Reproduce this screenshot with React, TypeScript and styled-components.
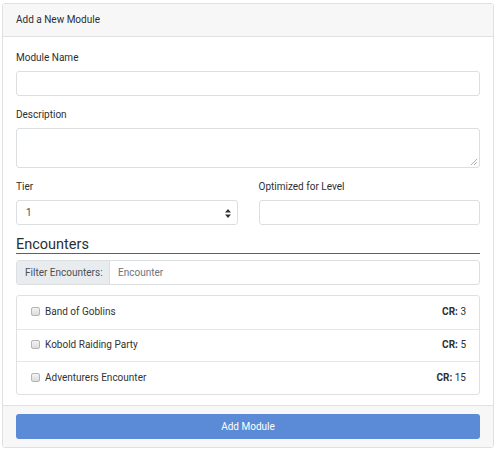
import React from "react";
import styled, { createGlobalStyle } from "styled-components";

const Global = createGlobalStyle`
  html, body { margin: 0; padding: 0; background: #fff; }
  body { font-family: Roboto, "Noto Sans", "Liberation Sans", sans-serif; font-size: 10px; color: #2b2f33; }
  * { box-sizing: border-box; }
`;

const Card = styled.div`
  margin: 3px 0 0 2px;
  width: 492px;
  height: 445px;
  border: 1px solid #e0e0e0;
  border-radius: 3px;
  display: flex;
  flex-direction: column;
  overflow: hidden;
`;

const CardHeader = styled.div`
  height: 33px;
  background: #f7f7f7;
  border-bottom: 1px solid #e0e0e0;
  padding: 0 13px;
  display: flex;
  align-items: center;
  line-height: 1;
`;

const CardBody = styled.div`
  flex: 1;
  padding: 13px 13px 0 13px;
  display: flex;
  flex-direction: column;
`;

const Label = styled.div`
  height: 21px;
  line-height: 15px;
`;

const Input = styled.div<{ $h?: number }>`
  height: ${p => p.$h ?? 25}px;
  border: 1px solid #dcdfe2;
  border-radius: 3px;
  background: #fff;
  position: relative;
  display: flex;
  align-items: center;
  padding: 0 9px;
  color: #495057;
`;

const Group = styled.div`
  margin-bottom: 11px;
`;

const Row = styled.div`
  display: grid;
  grid-template-columns: 1fr 1fr;
  column-gap: 21px;
`;

const Handle = styled.svg`
  position: absolute;
  right: 1px;
  bottom: 1px;
`;

const Arrows = styled.svg`
  position: absolute;
  right: 6px;
  top: 8px;
`;

const Heading = styled.div`
  font-size: 14.5px;
  line-height: 17px;
  height: 17px;
  border-bottom: 1px solid #606060;
  box-sizing: content-box;
`;

const InputGroup = styled.div`
  margin-top: 6px;
  height: 25px;
  display: flex;
  border: 1px solid #dcdfe2;
  border-radius: 3px;
  overflow: hidden;
`;

const Prepend = styled.div`
  width: 93px;
  background: #e9ecef;
  border-right: 1px solid #dcdfe2;
  display: flex;
  align-items: center;
  padding-left: 8px;
  color: #495057;
`;

const FilterText = styled.div`
  display: flex;
  align-items: center;
  padding-left: 8px;
  color: #6c757d;
`;

const List = styled.div`
  margin-top: 10px;
  border: 1px solid #e0e0e0;
  border-radius: 3px;
`;

const Item = styled.div`
  height: 32.5px;
  display: flex;
  align-items: center;
  padding: 0 13px 1px 14px;
  & + & { border-top: 1px solid #e6e6e6; }
`;

const Check = styled.span`
  width: 9px;
  height: 9px;
  border: 1px solid #b5b5b5;
  border-radius: 2px;
  background: linear-gradient(#f3f3f3, #dcdcdc);
  margin-right: 5px;
`;

const Name = styled.span`
  flex: 1;
  color: #333;
`;

const CR = styled.span`
  b { font-weight: 700; }
`;

const CardFooter = styled.div`
  height: 42px;
  background: #f7f7f7;
  border-top: 1px solid #e0e0e0;
  padding: 8px 13px 0 13px;
`;

const Button = styled.div`
  height: 25px;
  background: #5b8bd6;
  border-radius: 3px;
  color: #fff;
  display: flex;
  align-items: center;
  justify-content: center;
`;

const encounters = [
  { name: "Band of Goblins", cr: 3 },
  { name: "Kobold Raiding Party", cr: 5 },
  { name: "Adventurers Encounter", cr: 15 },
];

export default function App() {
  return (
    <>
      <Global />
      <Card>
        <CardHeader>Add a New Module</CardHeader>
        <CardBody>
          <Group>
            <Label>Module Name</Label>
            <Input />
          </Group>
          <Group>
            <Label>Description</Label>
            <Input $h={40}>
              <Handle width="8" height="8" viewBox="0 0 8 8">
                <path d="M7 1 L1 7 M7 4 L4 7" stroke="#999" strokeWidth="0.8" />
              </Handle>
            </Input>
          </Group>
          <Row>
            <Group>
              <Label>Tier</Label>
              <Input>
                1
                <Arrows width="6" height="9" viewBox="0 0 6 9">
                  <path d="M3 0 L6 3.5 H0 Z M3 9 L6 5.5 H0 Z" fill="#333" />
                </Arrows>
              </Input>
            </Group>
            <Group>
              <Label>Optimized for Level</Label>
              <Input />
            </Group>
          </Row>
          <Heading>Encounters</Heading>
          <InputGroup>
            <Prepend>Filter Encounters:</Prepend>
            <FilterText>Encounter</FilterText>
          </InputGroup>
          <List>
            {encounters.map(e => (
              <Item key={e.name}>
                <Check />
                <Name>{e.name}</Name>
                <CR><b>CR:</b> {e.cr}</CR>
              </Item>
            ))}
          </List>
        </CardBody>
        <CardFooter>
          <Button>Add Module</Button>
        </CardFooter>
      </Card>
    </>
  );
}
